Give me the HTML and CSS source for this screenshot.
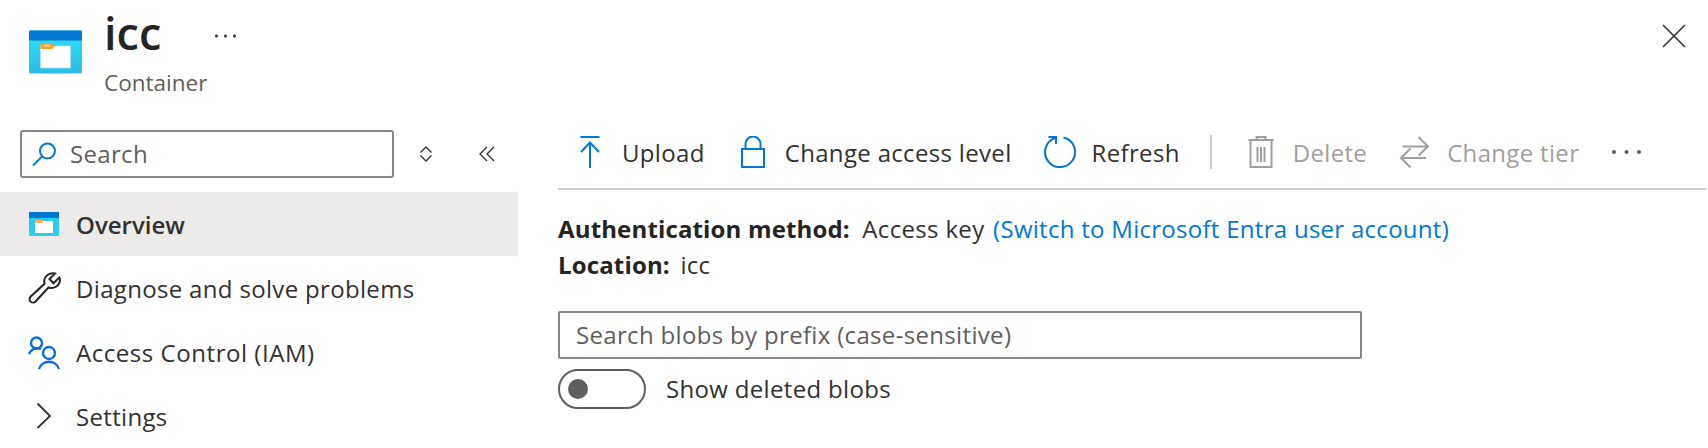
FILE: index.html
```html
<!DOCTYPE html>
<html lang="en">

<head>
    <meta charset="UTF-8">
    <title>icc - Container</title>
    <link rel="stylesheet" href="styles.css">
</head>

<body>
    <header class="page-header">
        <svg class="header-icon" viewBox="0 0 54 44">
            <defs>
                <linearGradient id="box-fill" x1="0" y1="0" x2="0" y2="1">
                    <stop offset="0.3" stop-color="#32d4f5" />
                    <stop offset="1" stop-color="#2bbde0" />
                </linearGradient>
            </defs>
            <rect width="53" height="43" y="0.5" rx="1.5" fill="url(#box-fill)" />
            <path d="M0 2a1.5 1.5 0 0 1 1.5-1.5h50A1.5 1.5 0 0 1 53 2v8.500H0z" fill="#0078d4" />
            <rect x="11.500" y="16" width="30" height="22" fill="#fff" stroke="#b5e3e6" stroke-width="0.600" />
            <path d="M11.500 19v-4a1.500 1.500 0 0 1 1.500-1.500h10l3 2.500-3 3z" fill="#ff9f2e" />
            <rect x="15" y="14.800" width="6" height="1.600" fill="#fde9cc" />
        </svg>
        <div class="header-text">
            <div class="title-row">
                <h1>icc</h1>
                <svg class="header-more" viewBox="0 0 21 4">
                    <circle cx="1.500" cy="2" r="1.500" />
                    <circle cx="10.500" cy="2" r="1.500" />
                    <circle cx="19.500" cy="2" r="1.500" />
                </svg>
            </div>
            <div class="subtitle">Container</div>
        </div>
        <svg class="close-icon" viewBox="0 0 24 24">
            <path d="M1 1l22 22M23 1L1 23" />
        </svg>
    </header>

    <div class="page-body">
        <nav class="sidebar">
            <div class="sidebar-search">
                <div class="search-box">
                    <svg class="search-icon" viewBox="0 0 25 25">
                        <circle cx="15.500" cy="9" r="7.500" />
                        <path d="M10 14.500L1 23.500" />
                    </svg>
                    <span>Search</span>
                </div>
                <svg class="diamond-icon" viewBox="0 0 14 16">
                    <path d="M1.500 6.500L7 1l5.500 5.500M1.500 9.500L7 15l5.500-5.500" />
                </svg>
                <svg class="collapse-icon" viewBox="0 0 16 16">
                    <path d="M8 1L1 8l7 7M15 1L8 8l7 7" />
                </svg>
            </div>
            <a class="nav-item active">
                <svg class="nav-icon" viewBox="0 0 30 24">
                    <rect width="30" height="24" fill="#2fcbee" />
                    <rect width="30" height="6" fill="#0078d4" />
                    <rect x="6" y="9" width="18" height="12" fill="#fff" />
                    <rect x="6" y="8" width="8" height="3" fill="#ffb35c" />
                </svg>
                Overview
            </a>
            <a class="nav-item">
                <svg class="nav-icon wrench" viewBox="0 0 32 32">
                    <path d="M31 7.500a8.500 8.500 0 0 1-11.500 8L6.500 29.500a3.300 3.300 0 0 1-5-4.800L15.500 11.800A8.500 8.500 0 0 1 26 1.500l-5.500 5.500 4 4.200 5.800-5.700q.7 1 .7 2z" />
                </svg>
                Diagnose and solve problems
            </a>
            <a class="nav-item">
                <svg class="nav-icon people" viewBox="0 0 32 32">
                    <circle cx="7.500" cy="7" r="5.500" />
                    <circle cx="20" cy="17" r="6" />
                    <path d="M0 18a9 9 0 0 1 12-5M10 33a10.500 10.500 0 0 1 20 0" />
                </svg>
                <span class="wide-label">Access Control (IAM)</span>
            </a>
            <a class="nav-item">
                <svg class="nav-icon chevron" viewBox="0 0 32 32">
                    <path d="M8.500 3.500l12.500 12.500-12.500 12" />
                </svg>
                Settings
            </a>
        </nav>

        <main class="content">
            <div class="toolbar">
                <button class="tool">
                    <svg class="tool-icon" viewBox="0 0 32 32">
                        <path d="M6.500 1h19M16 32V7M7 16l9-9.500 9 9.500" />
                    </svg>
                    Upload
                </button>
                <button class="tool">
                    <svg class="tool-icon" viewBox="0 0 32 32">
                        <path d="M5 13h22v18H5zM8.500 13V8a7.500 7.500 0 0 1 15 0v5" />
                    </svg>
                    Change access level
                </button>
                <button class="tool">
                    <svg class="tool-icon" viewBox="0 0 32 32">
                        <path d="M19.500 1.500A15 15 0 1 1 11 2M4.500 1H12V8" />
                    </svg>
                    Refresh
                </button>
                <span class="tool-sep"></span>
                <button class="tool disabled">
                    <svg class="tool-icon" viewBox="0 0 32 32">
                        <path d="M3.500 4h25M11.500 4V1h9v3M5.500 4v27h21V4M12.500 11v15M16 11v15M19.500 11v15" />
                    </svg>
                    Delete
                </button>
                <button class="tool disabled">
                    <svg class="tool-icon" viewBox="0 0 32 32">
                        <path d="M3.500 10.500h25M19.500 1l9.500 9.500-9.500 9M27 22H2.500M11.500 12.500L2 22l9.500 9.500" />
                    </svg>
                    Change tier
                </button>
                <svg class="tool-more" viewBox="0 0 29 4">
                    <circle cx="2" cy="2" r="2" />
                    <circle cx="14.500" cy="2" r="2" />
                    <circle cx="27" cy="2" r="2" />
                </svg>
            </div>

            <div class="info-row"><b>Authentication method:</b> Access key <a>(Switch to Microsoft Entra user account)</a></div>
            <div class="info-row location"><b>Location:</b> icc</div>

            <div class="prefix-box">Search blobs by prefix (case-sensitive)</div>

            <div class="toggle-row">
                <span class="toggle"><span class="toggle-dot"></span></span>
                <span class="toggle-label">Show deleted blobs</span>
            </div>
        </main>
    </div>
</body>

</html>
```

FILE: styles.css
```css
body {
    margin: 0;
    height: 448px;
    overflow: hidden;
    background-color: #fff;
    color: #323130;
    font-family: 'Open Sans', 'Noto Sans', sans-serif;
    font-size: 24px;
    letter-spacing: 0.33px;
}

svg {
    flex: none;
    fill: none;
}

/* header */
.page-header {
    display: flex;
    height: 130px;
    padding-left: 29px;
}

.header-icon {
    width: 54px;
    height: 44px;
    margin-top: 30px;
}

.header-text {
    margin-left: 21px;
}

.title-row {
    display: flex;
}

h1 {
    margin: 0;
    height: 66px;
    font-size: 45px;
    font-weight: 600;
    line-height: 66px;
    letter-spacing: 0;
    color: #252423;
}

.header-more {
    width: 21px;
    height: 4px;
    margin: 34px 0 0 54px;
    fill: #323130;
}

.subtitle {
    font-size: 22.500px;
    line-height: 34px;
    letter-spacing: 0;
    color: #605e5c;
}

.close-icon {
    width: 24px;
    height: 24px;
    margin: 24px 22px 0 auto;
    stroke: #323130;
    stroke-width: 1.600;
}

.page-body {
    display: flex;
}

/* left nav */
.sidebar {
    width: 518px;
    flex: none;
}

.sidebar-search {
    display: flex;
    align-items: center;
    height: 62px;
    padding-left: 20px;
}

.search-box {
    display: flex;
    align-items: center;
    box-sizing: border-box;
    width: 374px;
    height: 48px;
    margin-bottom: 14px;
    padding: 0 0 2px 10px;
    border: 2px solid #8a8886;
    border-radius: 3px;
    color: #605e5c;
}

.search-icon {
    width: 25px;
    height: 25px;
    margin: 2px 13px 0 0;
    stroke: #0078d4;
    stroke-width: 2;
}

.diamond-icon {
    width: 14px;
    height: 16px;
    margin: 0 0 14px 25px;
    stroke: #323130;
    stroke-width: 1.300;
}

.collapse-icon {
    width: 16px;
    height: 16px;
    margin: 0 0 14px 46px;
    stroke: #323130;
    stroke-width: 1.300;
}

.nav-item {
    display: flex;
    align-items: center;
    height: 64px;
    padding-left: 29px;
    color: #323130;
}

.nav-item.active {
    background-color: #edebe9;
    font-weight: 600;
    letter-spacing: 0;
}

.nav-icon {
    width: 32px;
    height: 32px;
    margin-right: 15px;
    overflow: visible;
}

.nav-item.active .nav-icon {
    width: 30px;
    height: 24px;
    margin-right: 17px;
}

.wide-label {
    letter-spacing: 0.550px;
}

.wrench {
    stroke: #252423;
    stroke-width: 2;
}

.people {
    stroke: #0f6cdc;
    stroke-width: 2.400;
}

.chevron {
    stroke: #323130;
    stroke-width: 1.800;
}

/* right side */
.content {
    width: 1148px;
    margin-left: 40px;
}

.toolbar {
    display: flex;
    align-items: center;
    box-sizing: border-box;
    height: 60px;
    padding: 0 0 14px 16px;
    border-bottom: 2px solid #d2d0ce;
}

.tool {
    display: flex;
    align-items: center;
    margin-right: 32px;
    padding: 0;
    border: 0;
    background: none;
    color: #323130;
    font: inherit;
    letter-spacing: inherit;
}

.tool-icon {
    width: 32px;
    height: 32px;
    margin-right: 16px;
    stroke: #0078d4;
    stroke-width: 2;
}

.tool.disabled {
    color: #a19f9d;
}

.tool.disabled .tool-icon {
    stroke: #a19f9d;
}

.tool-sep {
    width: 2px;
    height: 34px;
    margin: 0 33px 0 -2px;
    background-color: #d2d0ce;
}

.tool-more {
    width: 29px;
    height: 4px;
    margin-left: 1px;
    fill: #605e5c;
}

.info-row {
    line-height: 36px;
    color: #323130;
}

.toolbar + .info-row {
    margin-top: 21px;
}

.info-row b {
    margin-right: 6px;
    font-weight: 700;
    letter-spacing: 0.150px;
    color: #252423;
}

.location b {
    margin-right: 4px;
}

.info-row a {
    margin-left: 2px;
    letter-spacing: 0.280px;
    color: #0078d4;
}

.prefix-box {
    display: flex;
    align-items: center;
    box-sizing: border-box;
    width: 804px;
    height: 48px;
    margin-top: 28px;
    padding: 0 0 2px 16px;
    border: 2px solid #8a8886;
    border-radius: 2px;
    color: #605e5c;
}

.toggle-row {
    display: flex;
    align-items: center;
    margin-top: 10px;
}

.toggle {
    display: flex;
    align-items: center;
    box-sizing: border-box;
    width: 88px;
    height: 40px;
    margin-right: 20px;
    padding-left: 8px;
    border: 2px solid #605e5c;
    border-radius: 20px;
}

.toggle-dot {
    width: 20px;
    height: 20px;
    border-radius: 50%;
    background-color: #605e5c;
}

.toggle-label {
    padding-bottom: 2px;
}
```
